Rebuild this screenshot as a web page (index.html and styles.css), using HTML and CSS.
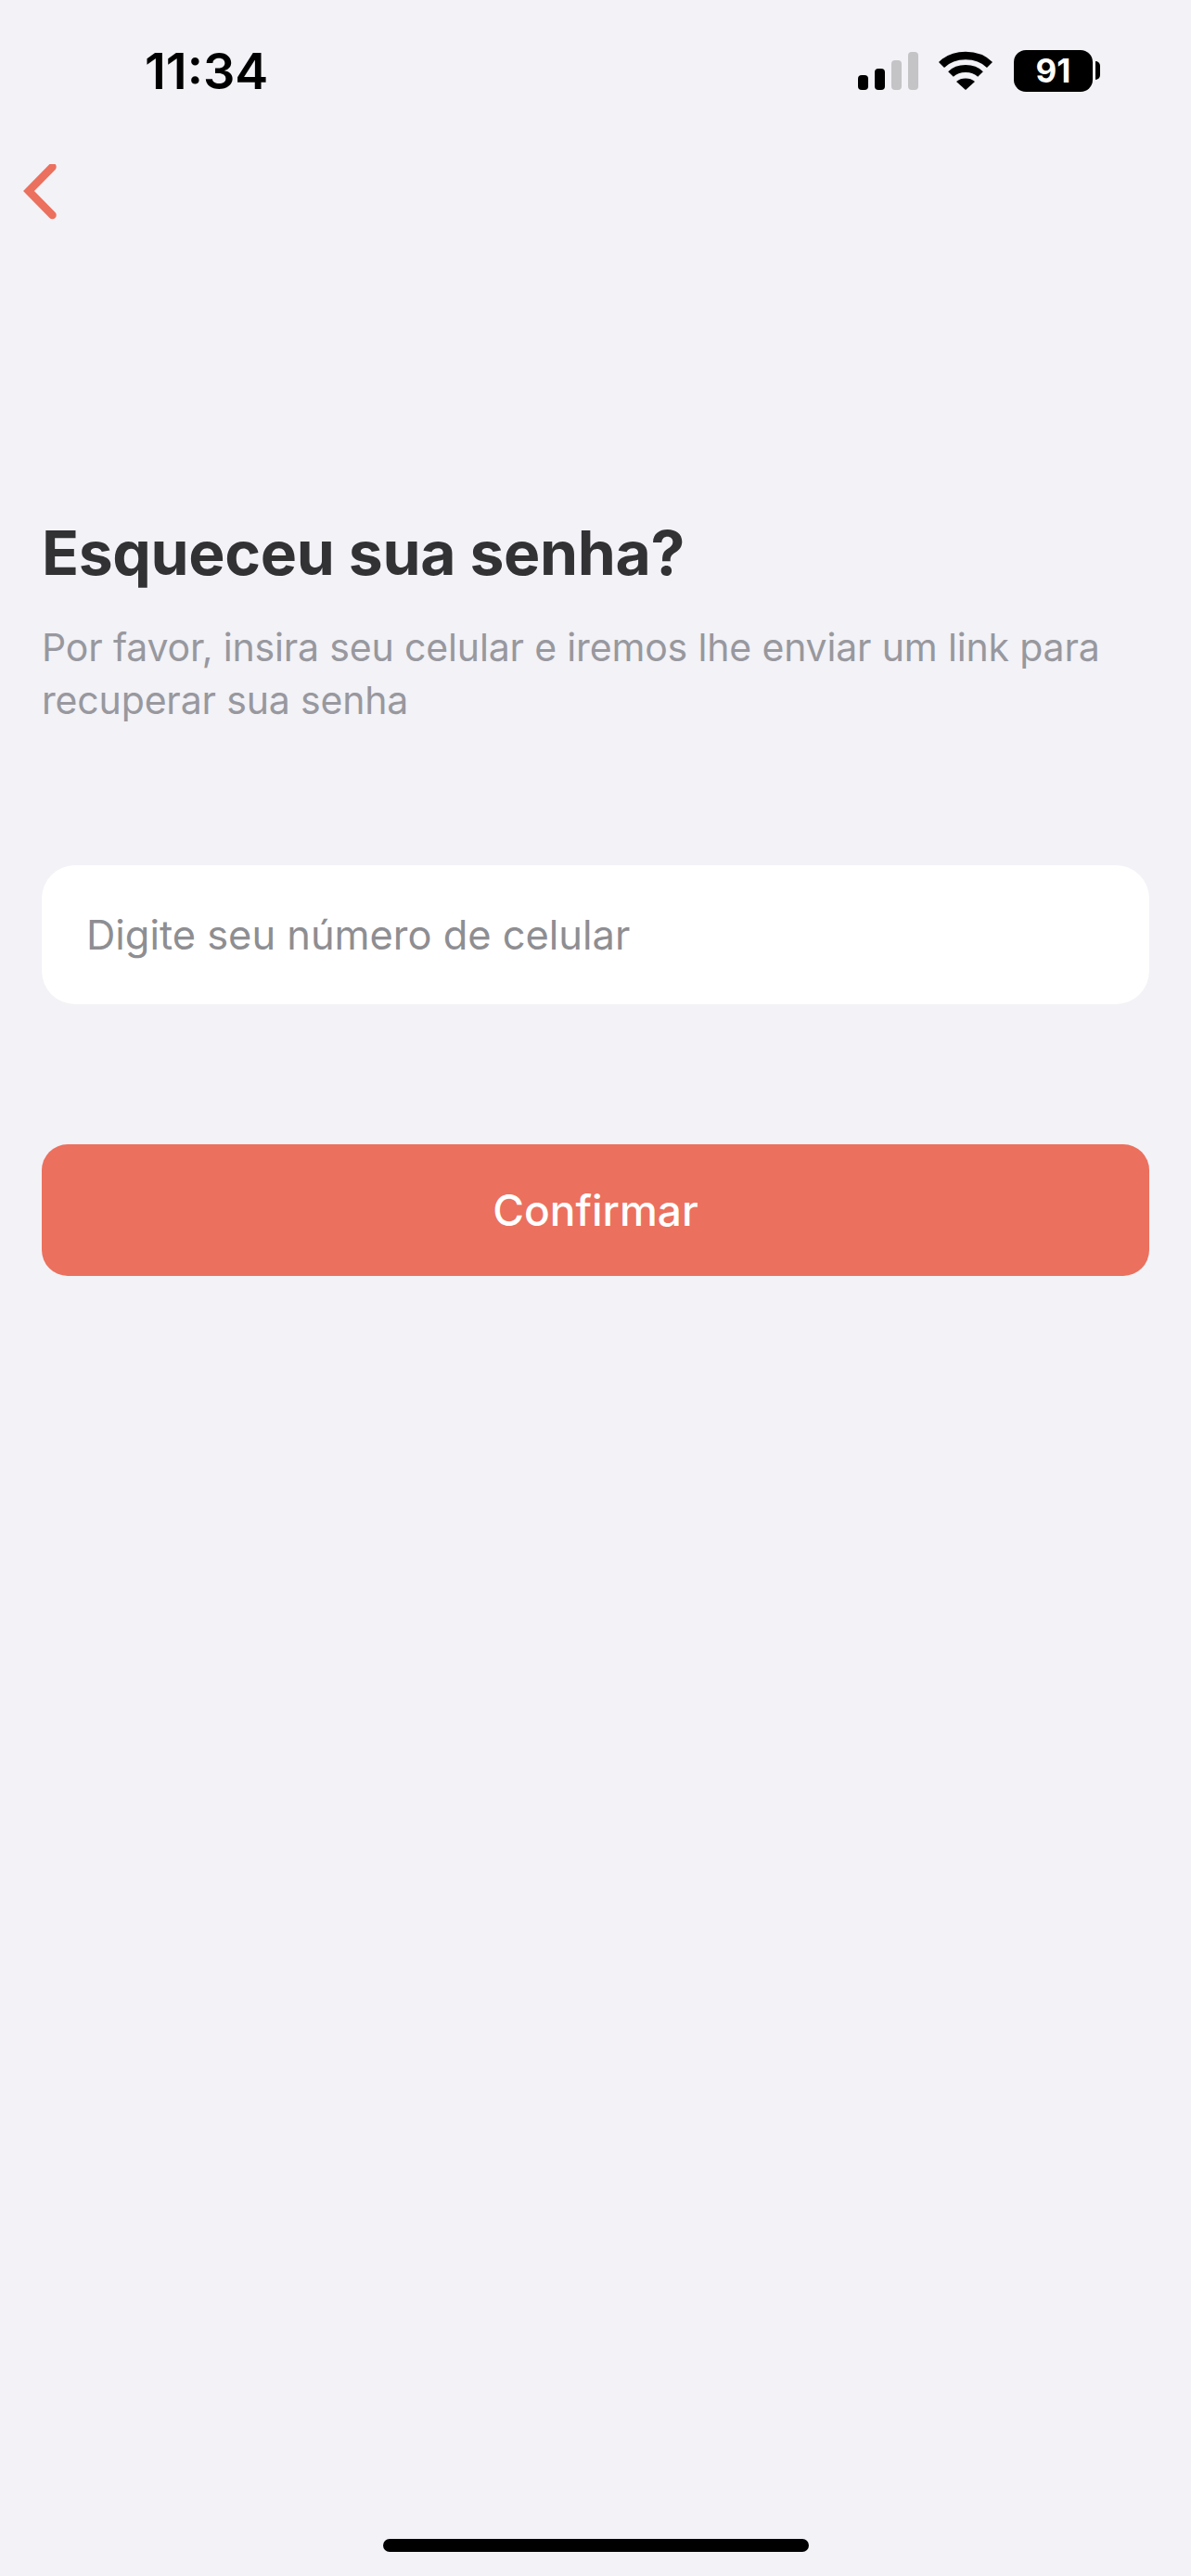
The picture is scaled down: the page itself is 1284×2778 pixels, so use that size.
FILE: index.html
```html
<!DOCTYPE html>
<html lang="pt-BR">
<head>
<meta charset="utf-8">
<title>Esqueceu sua senha?</title>
<link rel="stylesheet" href="styles.css">
</head>
<body>
<div class="screen">
  <header class="status">
    <span class="time">11:34</span>
    <div class="indicators">
      <svg class="signal" width="65" height="41" viewBox="0 0 65 41">
        <rect x="0" y="25" width="11" height="16" rx="4" fill="#000"/>
        <rect x="18" y="18" width="11" height="23" rx="4" fill="#000"/>
        <rect x="36" y="9" width="11" height="32" rx="4" fill="#c4c4c6"/>
        <rect x="54" y="0" width="11" height="41" rx="4" fill="#c4c4c6"/>
      </svg>
      <svg class="wifi" width="58" height="42" viewBox="0 0 58 42">
        <path d="M29 5C18 5 9 9 3 15" fill="none" stroke="#000" stroke-width="8.5"/>
        <path d="M29 5C40 5 49 9 55 15" fill="none" stroke="#000" stroke-width="8.5"/>
        <path d="M13 25C17 21 23 19 29 19C35 19 41 21 45 25" fill="none" stroke="#000" stroke-width="8"/>
        <path d="M19 33C22 30.500 25 29.500 29 29.500C33 29.500 36 30.500 39 33L29 42Z" fill="#000"/>
      </svg>
      <div class="battery">
        <div class="battery-body">91</div>
        <div class="battery-nub"></div>
      </div>
    </div>
  </header>
  <nav class="nav">
    <svg class="back" width="42" height="62" viewBox="0 0 42 62">
      <path d="M35.500 3L10 29L35.500 55" fill="none" stroke="#eb705e" stroke-width="8.500" stroke-linecap="round" stroke-linejoin="miter"/>
    </svg>
  </nav>
  <main class="content">
    <h1 class="title">Esqueceu sua senha?</h1>
    <p class="subtitle">Por favor, insira seu celular e iremos lhe enviar um link para recuperar sua senha</p>
    <div class="field">Digite seu número de celular</div>
    <div class="button">Confirmar</div>
  </main>
  <div class="home-bar"></div>
</div>
</body>
</html>
```

FILE: styles.css
```css
* { box-sizing: border-box; }
html, body { margin: 0; padding: 0; }
body { background: #f2f2f7; font-family: Inter, "Liberation Sans", sans-serif; }
.screen { position: relative; width: 1284px; height: 2778px; overflow: hidden; background: #f2f2f7; }
.status { display: flex; justify-content: space-between; align-items: center; height: 46px; margin-top: 53px; padding: 0 98px 0 156px; }
.time { font-size: 54px; font-weight: 600; color: #000; line-height: 46px; padding-top: 2px; }
.indicators { display: flex; align-items: center; }
.signal { margin-right: 22px; }
.wifi { margin-right: 23px; }
.battery { display: flex; align-items: center; gap: 3px; }
.battery-body { width: 85px; height: 45px; border-radius: 13px; background: #000; color: #fff; font-size: 35px; font-weight: 700; line-height: 45px; text-align: center; }
.battery-nub { width: 5px; height: 20px; border-radius: 0 10px 10px 0; background: #000; }
.nav { height: 62px; margin-top: 78px; padding-left: 21px; }
.back { display: block; }
.content { padding: 0 45px 0 45px; margin-top: 317px; }
.title { margin: 0; font-size: 66px; font-weight: 700; line-height: 80px; color: #323235; letter-spacing: -0.35px; }
.subtitle { margin: 34px 0 0; font-size: 41px; font-weight: 400; line-height: 57px; color: #98989e; letter-spacing: -0.16px; }
.field { display: flex; align-items: center; height: 150px; margin-top: 149px; padding-left: 48px; background: #fff; border-radius: 36px; font-size: 43.400px; color: #8e8e92; }
.button { display: flex; align-items: center; justify-content: center; height: 142px; margin-top: 151px; background: #eb705e; border-radius: 28px; color: #fff; font-size: 46px; font-weight: 500; }
.home-bar { position: absolute; left: 413px; top: 2738px; width: 459px; height: 14px; border-radius: 7px; background: #000; }
```
